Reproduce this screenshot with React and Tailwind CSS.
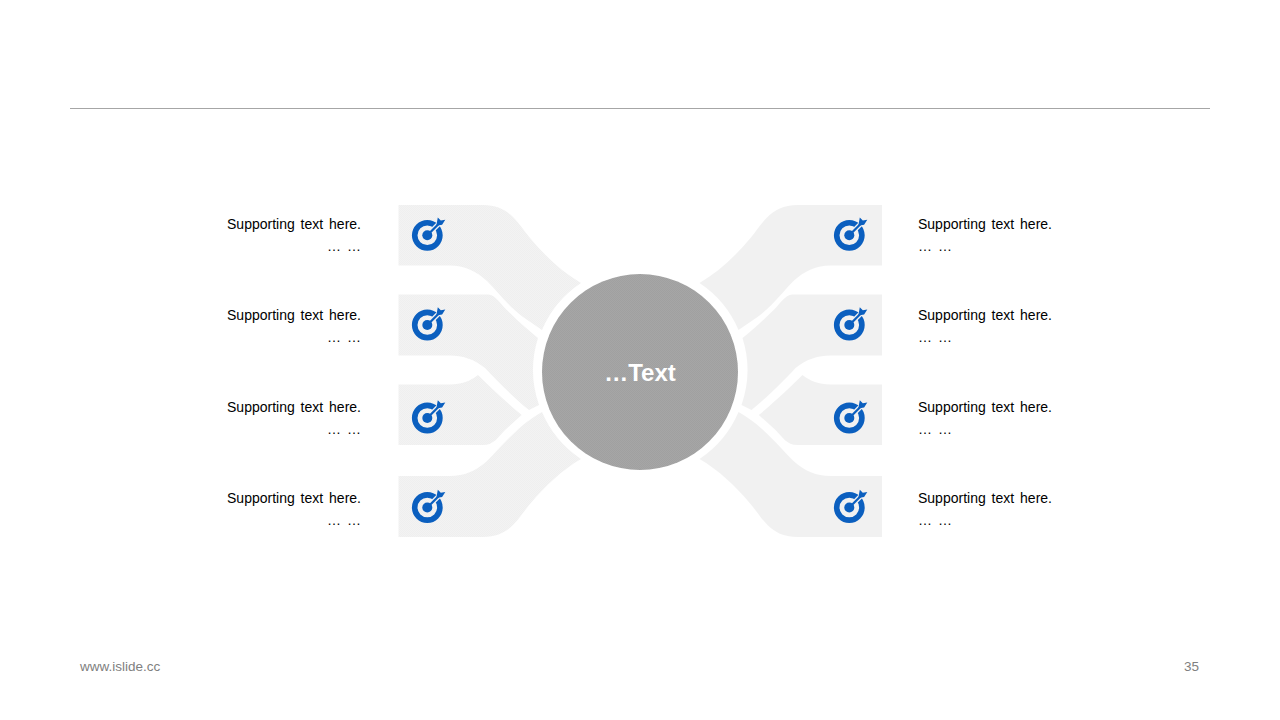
const PETALS = [
  "M398.5 205H483C497 205 506 210 513 217C520 224 524 231 530 238C545 256 562 272 581 283A106.5 106.5 0 0 0 542 330L523 317C508 306 498 292 487 281C476 271 464 265.5 450 265.5H398.5Z",
  "M398.5 294.5H488C496 295 500 304 510 313C518 321 528 330 538 338A106.5 106.5 0 0 0 539 405L529 410C513 397 497 381 485 368C474 359 462 355.5 450 355.5H398.5Z",
  "M398.5 384.5H450C462 384.5 470 381 478 375C490 387 506 402 521.7 415L505 430C498 437 494 445 483 445H398.5Z",
  "M398.5 476H450C464 476 476 471 487 461C498 450 508 438 523 425C529 420 535 416 542 412A106.5 106.5 0 0 0 581 459C562 470 545 486 530 504C524 511 520 518 513 525C506 532 497 537 483 537H398.5Z",
];

const ICON_Y = [235.3, 325, 418, 507.5];
const ICON_X = [427.3, 849.3];

function Target({ x, y }) {
  return (
    <g transform={`translate(${x} ${y})`}>
      <circle r="12.6" fill="none" stroke="#0b5fbf" strokeWidth="5.6" />
      <path d="M3 -3L16 -16" stroke="#f1f1f1" strokeWidth="5" />
      <circle r="5" fill="#0b5fbf" />
      <path d="M0 0L12 -12" stroke="#0b5fbf" strokeWidth="2.3" />
      <path d="M9 -9.5L10.5 -17.8L13.5 -14.8L18 -15.5L14.8 -10.5Z" fill="#0b5fbf" />
    </g>
  );
}

function Caption({ right }) {
  return (
    <div className={`h-[44px] text-[14px] leading-[22px] text-black [word-spacing:2px] whitespace-nowrap ${right ? "text-left" : "text-right"}`}>
      <div>Supporting text here.</div>
      <div>… …</div>
    </div>
  );
}

function Column({ right }) {
  return (
    <div className="w-[135px] h-[318px] mt-[8px] shrink-0 flex flex-col justify-between">
      <Caption right={right} />
      <Caption right={right} />
      <Caption right={right} />
      <Caption right={right} />
    </div>
  );
}

export default function App() {
  return (
    <div className="w-[1280px] h-[720px] bg-white overflow-hidden flex flex-col font-['Liberation_Sans',Arial,sans-serif]">
      <div className="mt-[108px] mx-[70px] h-px bg-[#a6a6a6] shrink-0" />
      <div className="mt-[96px] pl-[226px] flex items-start">
        <Column />
        <div className="relative ml-[37px] mr-[36px] w-[484px] h-[332px] shrink-0">
          <svg width="484" height="332" viewBox="398 205 484 332" className="block">
            <defs>
              <pattern id="soft" width="2" height="2" patternUnits="userSpaceOnUse">
                <rect width="2" height="2" fill="#f3f3f3" />
                <rect width="1" height="1" fill="#efefef" />
                <rect x="1" y="1" width="1" height="1" fill="#efefef" />
              </pattern>
              <pattern id="hard" width="2" height="2" patternUnits="userSpaceOnUse">
                <rect width="2" height="2" fill="#a6a6a6" />
                <rect width="1" height="1" fill="#a0a0a0" />
                <rect x="1" y="1" width="1" height="1" fill="#a0a0a0" />
              </pattern>
            </defs>
            {PETALS.map((d) => (
              <path key={d} d={d} fill="url(#soft)" />
            ))}
            <g transform="translate(1280.5 0) scale(-1 1)">
              {PETALS.map((d) => (
                <path key={d} d={d} fill="url(#soft)" />
              ))}
            </g>
            <circle cx="640" cy="372" r="98" fill="url(#hard)" />
            {ICON_X.flatMap((x) => ICON_Y.map((y) => <Target key={`${x}-${y}`} x={x} y={y} />))}
          </svg>
          <div className="absolute left-[144px] top-[69px] w-[196px] h-[196px] pt-[2px] flex items-center justify-center text-[24px] font-bold text-white">
            …Text
          </div>
        </div>
        <Column right />
      </div>
      <div className="mt-auto mb-[44px] pl-[80px] pr-[81px] flex justify-between text-[13.5px] leading-[18px]">
        <span className="text-[#808080]">www.islide.cc</span>
        <span className="text-[#808080]">35</span>
      </div>
    </div>
  );
}
